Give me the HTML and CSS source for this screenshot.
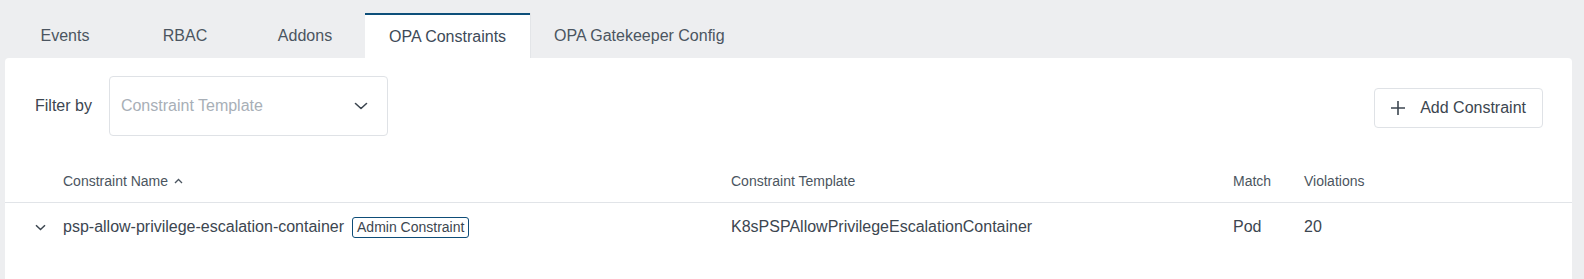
FILE: index.html
```html
<!DOCTYPE html>
<html lang="en">
<head>
<meta charset="utf-8">
<title>OPA Constraints</title>
<link rel="stylesheet" href="styles.css">
</head>
<body>
  <nav class="tabs">
    <div class="tab">Events</div>
    <div class="tab">RBAC</div>
    <div class="tab">Addons</div>
    <div class="tab active">OPA Constraints</div>
    <div class="tab">OPA Gatekeeper Config</div>
  </nav>
  <main class="card">
    <div class="toolbar">
      <div class="filter">
        <span class="filter-label">Filter by</span>
        <div class="select">
          <span class="placeholder">Constraint Template</span>
          <svg class="select-arrow" width="14" height="8" viewBox="0 0 14 8"><path d="M1.5 1.5 L7 6.5 L12.5 1.5" fill="none" stroke="#3c4650" stroke-width="1.6" stroke-linecap="round" stroke-linejoin="round"/></svg>
        </div>
      </div>
      <button class="add-btn">
        <svg width="16" height="16" viewBox="0 0 16 16"><path d="M8 1 V15 M1 8 H15" fill="none" stroke="#3c4650" stroke-width="1.6"/></svg>
        <span>Add Constraint</span>
      </button>
    </div>
    <div class="table">
      <div class="row head">
        <div class="cell"></div>
        <div class="cell">Constraint Name
          <svg class="sort" width="9" height="6" viewBox="0 0 9 6"><path d="M1 5 L4.5 1.5 L8 5" fill="none" stroke="#4b5560" stroke-width="1.3"/></svg>
        </div>
        <div class="cell">Constraint Template</div>
        <div class="cell">Match</div>
        <div class="cell">Violations</div>
      </div>
      <div class="row body">
        <div class="cell expand">
          <svg width="11" height="7" viewBox="0 0 11 7"><path d="M1 1.2 L5.5 5.5 L10 1.2" fill="none" stroke="#3c4650" stroke-width="1.5"/></svg>
        </div>
        <div class="cell">psp-allow-privilege-escalation-container <span class="badge">Admin Constraint</span></div>
        <div class="cell">K8sPSPAllowPrivilegeEscalationContainer</div>
        <div class="cell">Pod</div>
        <div class="cell">20</div>
      </div>
    </div>
  </main>
</body>
</html>
```

FILE: styles.css
```css
html, body {
  margin: 0;
  padding: 0;
}
body {
  background: #edeef0;
  font-family: "Liberation Sans", Arial, sans-serif;
  color: #3c4650;
  height: 279px;
  overflow: hidden;
}
.tabs {
  display: flex;
  padding: 13px 0 0 5px;
  height: 45px;
  box-sizing: content-box;
}
.tab {
  min-width: 120px;
  padding: 0 24px;
  box-sizing: border-box;
  display: flex;
  align-items: center;
  justify-content: center;
  font-size: 16px;
  color: #4b5560;
  height: 45px;
  white-space: nowrap;
}
.tab.active {
  background: #fff;
  border-top: 2px solid #0d4f7a;
  color: #3d4a58;
  box-shadow: 1px 0 0 #e3e5e8;
}
.card {
  margin: 0 12px 0 5px;
  background: #fff;
  border-radius: 4px 4px 0 0;
  height: 240px;
  padding-top: 18px;
  box-sizing: border-box;
}
.toolbar {
  display: flex;
  align-items: center;
  justify-content: space-between;
  padding: 0 29px 0 30px;
}
.filter {
  display: flex;
  align-items: center;
  gap: 17px;
}
.filter-label {
  font-size: 16px;
  color: #3c4650;
}
.select {
  width: 279px;
  height: 60px;
  box-sizing: border-box;
  border: 1px solid #dfe2e6;
  border-radius: 4px;
  display: flex;
  align-items: center;
  justify-content: space-between;
  padding: 0 19px 0 11px;
}
.placeholder {
  font-size: 16px;
  color: #a8afb7;
}
.add-btn {
  display: flex;
  align-items: center;
  gap: 14px;
  height: 40px;
  margin-top: 4px;
  padding: 0 16px 0 15px;
  background: #fff;
  border: 1px solid #dfe2e6;
  border-radius: 4px;
  font-family: inherit;
  font-size: 16px;
  color: #3c4650;
}
.table {
  margin-top: 24px;
}
.row {
  display: grid;
  grid-template-columns: 58px 668px 502px 71px 1fr;
  align-items: center;
}
.row.head {
  height: 42px;
  border-bottom: 1px solid #e1e4e8;
  font-size: 14px;
  color: #4b5560;
}
.row.body {
  height: 48px;
  font-size: 16px;
  color: #3c4650;
}
.cell {
  white-space: nowrap;
  display: flex;
  align-items: center;
}
.sort {
  margin-left: 6px;
}
.expand {
  padding-left: 30px;
}
.badge {
  margin-left: 8px;
  font-size: 14px;
  border: 1px solid #0e4d78;
  border-radius: 3px;
  padding: 0 4px;
  height: 21px;
  box-sizing: border-box;
  display: inline-flex;
  align-items: center;
  color: #3c4650;
}
```
